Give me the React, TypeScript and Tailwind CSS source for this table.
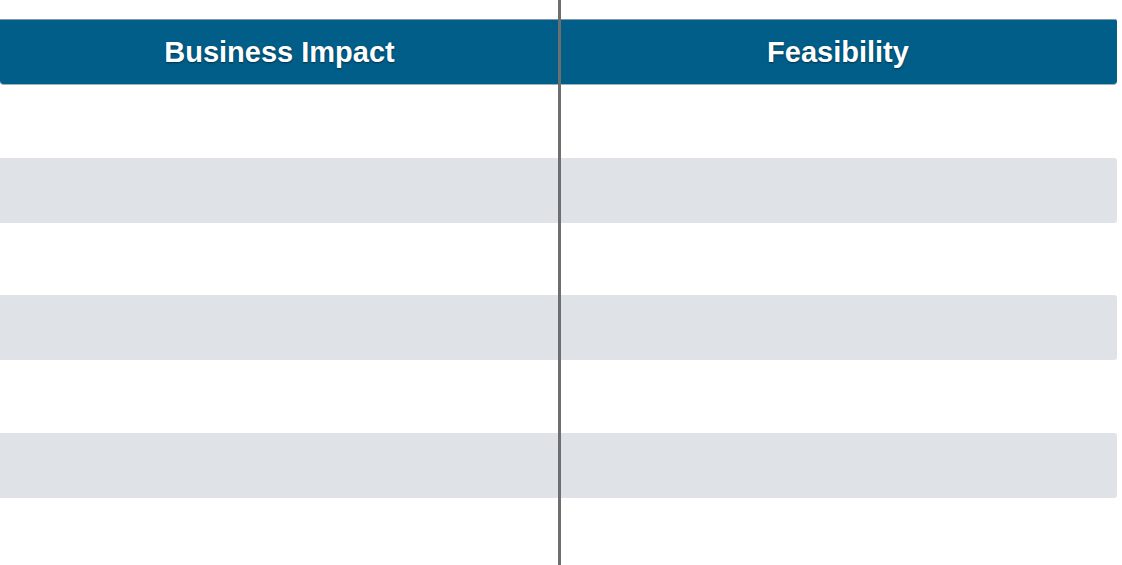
import React from "react";

export default function App() {
  const rows = [
    { h: "h-[73px]", gray: false },
    { h: "h-[65px]", gray: true },
    { h: "h-[72px]", gray: false },
    { h: "h-[65px]", gray: true },
    { h: "h-[73px]", gray: false },
    { h: "h-[65px]", gray: true },
    { h: "h-[67px]", gray: false },
  ];
  return (
    <div
      className="relative w-[1122px] h-[565px] bg-white overflow-hidden"
      style={{ fontFamily: '"Liberation Sans", Arial, sans-serif' }}
    >
      <div className="w-[1117px] pt-[19px]">
        <div className="flex h-[66px] bg-[#015e89] rounded-b-[4px] rounded-tr-[2px] border-t border-[#7d98ad] border-b border-b-[#9fb0bd]">
          <div className="w-[559px] flex items-center justify-center">
            <span className="text-white font-bold text-[29px] leading-none [text-shadow:0_1px_2px_rgba(0,0,0,0.45)]">
              Business Impact
            </span>
          </div>
          <div className="flex-1 flex items-center justify-center">
            <span className="text-white font-bold text-[29px] leading-none [text-shadow:0_1px_2px_rgba(0,0,0,0.45)]">
              Feasibility
            </span>
          </div>
        </div>
        {rows.map((r, i) => (
          <div
            key={i}
            className={`${r.h} ${r.gray ? "bg-[#dfe3e8] rounded-r-[3px]" : "bg-white"}`}
          />
        ))}
      </div>
      <div className="absolute left-[558px] top-0 w-[3px] h-[565px] bg-[#6d6e70]" />
    </div>
  );
}
